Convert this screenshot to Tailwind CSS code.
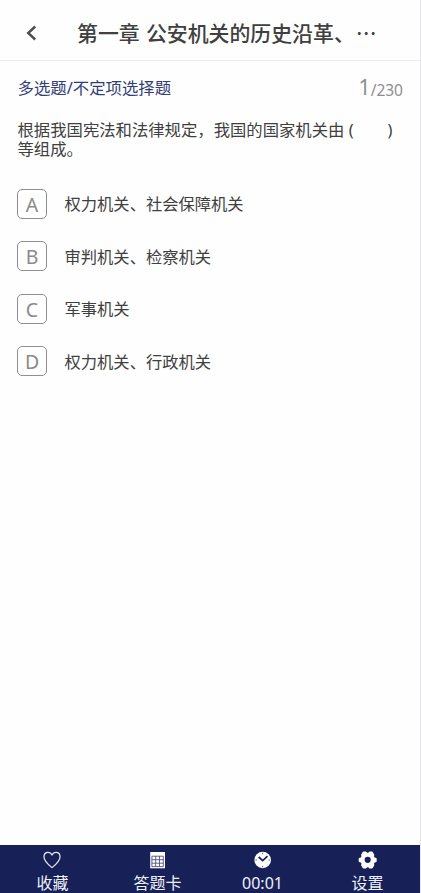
<!DOCTYPE html>
<html lang="zh-CN">
<head>
<meta charset="utf-8">
<title>答题</title>
<script src="https://cdn.jsdelivr.net/npm/@tailwindcss/browser@4"></script>
</head>
<body class="bg-white font-['Noto_Sans','Noto_Sans_CJK_SC',sans-serif] text-[#404040]">
<div class="flex h-[893px] w-[421px] flex-col overflow-hidden border-r border-[#e6e6ea] bg-[#fefefe]">
  <header class="flex h-[61px] shrink-0 items-center border-b border-[#ececee] pt-[3px]">
    <svg class="mt-[3px] ml-[26px] h-4 w-[11px] shrink-0" viewBox="0 0 11 16" fill="none" stroke="#4d4d4d" stroke-width="2.4"><path d="M9.2 1.5 2.2 8l7 6.5"/></svg>
    <h1 class="ml-[40px] text-[20.9px] leading-[30px] font-medium whitespace-nowrap text-[#404040] font-['Noto_Sans_CJK_SC',sans-serif]">第一章<span class="inline-block w-[6.2px]"> </span>公安机关的历史沿革、<span class="ml-[1px]">…</span></h1>
  </header>
  <main class="flex-1">
    <div class="flex h-[54px] items-center justify-between pr-[17px] pl-[17.5px]">
      <span class="text-[16.4px] leading-6 whitespace-nowrap text-[#333d78]">多选题/不定项选择题</span>
      <span class="flex items-start text-[15.5px] leading-6 text-[#8e8e8e]"><span class="mt-[1px] text-[21px]">1</span><span class="mt-[4px]">/230</span></span>
    </div>
    <p class="mt-[6px] pl-[17.5px] text-[16.35px] leading-[19px] whitespace-nowrap">根据我国宪法和法律规定，我国的国家机关由 (<span class="inline-block w-[34px]"></span>)<br>等组成。</p>
    <ul class="mt-[30px] flex flex-col gap-[23.5px] pl-[17px] font-['Noto_Sans_CJK_SC',sans-serif]">
      <li class="flex h-[29px] items-center"><span class="flex size-[30px] items-center justify-center rounded-[5px] border-[1.5px] border-[#8f8f8f] font-['Noto_Sans'] text-[19.5px] leading-7 text-[#8a8a8a]"><span class="mt-[2px]">A</span></span><span class="ml-[17.5px] text-[16.3px]">权力机关、社会保障机关</span></li>
      <li class="flex h-[29px] items-center"><span class="flex size-[30px] items-center justify-center rounded-[5px] border-[1.5px] border-[#8f8f8f] font-['Noto_Sans'] text-[19.5px] leading-7 text-[#8a8a8a]"><span class="mt-[2px]">B</span></span><span class="ml-[17.5px] text-[16.3px]">审判机关、检察机关</span></li>
      <li class="flex h-[29px] items-center"><span class="flex size-[30px] items-center justify-center rounded-[5px] border-[1.5px] border-[#8f8f8f] font-['Noto_Sans'] text-[19.5px] leading-7 text-[#8a8a8a]"><span class="mt-[2px]">C</span></span><span class="ml-[17.5px] text-[16.3px]">军事机关</span></li>
      <li class="flex h-[29px] items-center"><span class="flex size-[30px] items-center justify-center rounded-[5px] border-[1.5px] border-[#8f8f8f] font-['Noto_Sans'] text-[19.5px] leading-7 text-[#8a8a8a]"><span class="mt-[2px]">D</span></span><span class="ml-[17.5px] text-[16.3px]">权力机关、行政机关</span></li>
    </ul>
  </main>
  <nav class="grid h-[48px] shrink-0 grid-cols-4 bg-[#182058] text-[16px] leading-[18px] text-[#eef0f8]">
    <div class="flex flex-col items-center pt-[5px]">
      <svg class="-ml-px h-5 w-5 shrink-0" viewBox="0 0 20 20" fill="none" stroke="#e8eaf4" stroke-width="1.2" stroke-linejoin="round"><path d="M10 17.6C6.2 14.5 2 11.2 2 6.9 2 4.2 3.8 2.4 6 2.4c1.8 0 3.2 1 4 2.7.8-1.7 2.2-2.7 4-2.7 2.2 0 4 1.8 4 4.5 0 4.3-4.2 7.6-8 10.7Z"/></svg>
      <span class="mt-[4px]">收藏</span>
    </div>
    <div class="flex flex-col items-center pt-[5px]">
      <svg class="h-5 w-5 shrink-0" viewBox="0 0 20 20"><path fill="#fff" d="M2.2 2h14.8v16.3H2.2z"/><path fill="none" stroke="#4c5482" stroke-width=".9" d="M3.9 6.2h11.4v10.4H3.9zM3.9 9.7h11.4M3.9 13.2h11.4M7.7 6.2v10.4M11.5 6.2v10.4"/></svg>
      <span class="mt-[4px]">答题卡</span>
    </div>
    <div class="flex flex-col items-center pt-[5px]">
      <svg class="h-5 w-5 shrink-0" viewBox="0 0 20 20"><circle cx="9.7" cy="10" r="8.3" fill="#fff"/><path fill="none" stroke="#182058" stroke-width="1.7" d="m5.6 7 4.1 3.7 4.8-4.5"/><path stroke="#182058" stroke-width=".7" d="M9.7 2.7v1.5M9.7 15.8v1.5M2.4 10h1.5M15.5 10h1.5"/></svg>
      <span class="mt-[4px]">00:01</span>
    </div>
    <div class="flex flex-col items-center pt-[5px]">
      <svg class="h-5 w-5 shrink-0" viewBox="0 0 20 20"><g fill="#fff" stroke="#fff" stroke-width="1.6" stroke-linejoin="round"><path d="M5.4 2.4h2.3l1.1 1.1h1.8l1.1-1.1H14l1.5 2.5-.4 1.6 1 1.6 1.8.6v2.6l-1.8.6-1 1.6.4 1.6-1.5 2.5h-2.3l-1.1-1.1H8.8l-1.1 1.1H5.4l-1.5-2.5.4-1.6-1-1.6-1.8-.6V8.7l1.8-.6 1-1.6-.4-1.6Z"/></g><circle cx="9.7" cy="9.8" r="3.1" fill="#182058"/></svg>
      <span class="mt-[4px]">设置</span>
    </div>
  </nav>
</div>
</body>
</html>
